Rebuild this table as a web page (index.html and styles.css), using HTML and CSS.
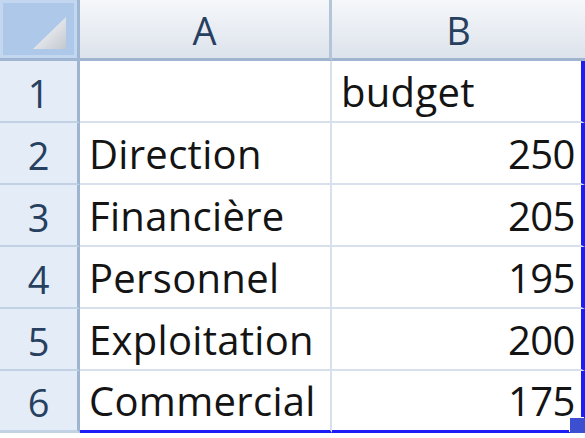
FILE: index.html
```html
<!DOCTYPE html>
<html>
<head>
<meta charset="utf-8">
<link rel="stylesheet" href="styles.css">
</head>
<body>
<div class="sheet">
  <div class="corner">
    <svg class="corner-tri" width="80" height="61" viewBox="0 0 80 61">
      <defs>
        <linearGradient id="tg" x1="0" y1="0" x2="1" y2="1">
          <stop offset="0" stop-color="#ffffff"/>
          <stop offset="1" stop-color="#c3c8d0"/>
        </linearGradient>
      </defs>
      <polygon points="33,49 66,17 66,49" fill="url(#tg)"/>
    </svg>
  </div>
  <div class="colhead">A</div>
  <div class="colhead last">B</div>

  <div class="rowhead">1</div>
  <div class="cell"></div>
  <div class="cell colb">budget</div>

  <div class="rowhead">2</div>
  <div class="cell">Direction</div>
  <div class="cell colb num">250</div>

  <div class="rowhead">3</div>
  <div class="cell">Financière</div>
  <div class="cell colb num">205</div>

  <div class="rowhead">4</div>
  <div class="cell">Personnel</div>
  <div class="cell colb num">195</div>

  <div class="rowhead">5</div>
  <div class="cell">Exploitation</div>
  <div class="cell colb num">200</div>

  <div class="rowhead lastrow">6</div>
  <div class="cell lastrow">Commercial</div>
  <div class="cell colb num lastrow">175<span class="handle"></span></div>
</div>
</body>
</html>
```
FILE: styles.css
```css
html, body {
  margin: 0;
  padding: 0;
  background: #ffffff;
}
body {
  width: 585px;
  height: 438px;
  overflow: hidden;
}
.sheet {
  display: grid;
  grid-template-columns: 80px 252px 253px;
  grid-template-rows: 61px repeat(6, 62px);
  font-family: "Open Sans", Lato, sans-serif;
  font-size: 40px;
  line-height: 1;
  color: #141414;
}
.sheet > div {
  box-sizing: border-box;
  display: flex;
  align-items: flex-end;
  padding-bottom: 9px;
}
.corner {
  position: relative;
  background: #aec8ea;
  border-right: 3px solid #9fb6d2;
  border-bottom: 3px solid #9fb6d2;
  box-shadow: inset 0 0 0 3px #c4d7f0;
}
.corner-tri {
  position: absolute;
  left: 0;
  top: 0;
}
.colhead {
  justify-content: center;
  background: linear-gradient(#f5f7fa, #dde3ec);
  border-right: 3px solid #b4c5da;
  border-bottom: 3px solid #9fb4cf;
  color: #27405f;
  font-size: 38px;
  padding-bottom: 9px !important;
}
.colhead.last {
  border-right: none;
}
.rowhead {
  justify-content: center;
  background: #e4ecf7;
  border-right: 3px solid #9fb4cf;
  border-bottom: 2px solid #c3d1e4;
  color: #27405f;
  font-size: 38px;
}
.cell {
  padding-left: 9px;
  padding-right: 6px;
  font-weight: 500;
  letter-spacing: 0.3px;
  border-right: 2px solid #d8e0eb;
  border-bottom: 2px solid #d8e0eb;
}
.colb {
  position: relative;
  border-right: 4px solid #1c1cf5;
}
.num {
  justify-content: flex-end;
  letter-spacing: -0.5px;
}
.lastrow {
  border-bottom-width: 3px;
}
.cell.lastrow {
  border-bottom: 3px solid #1c1cf5;
}
.handle {
  position: absolute;
  right: -4px;
  bottom: -3px;
  width: 15px;
  height: 15px;
  background: #3b4fd0;
  box-shadow: -1px -1px 0 #ffffff;
}
```
